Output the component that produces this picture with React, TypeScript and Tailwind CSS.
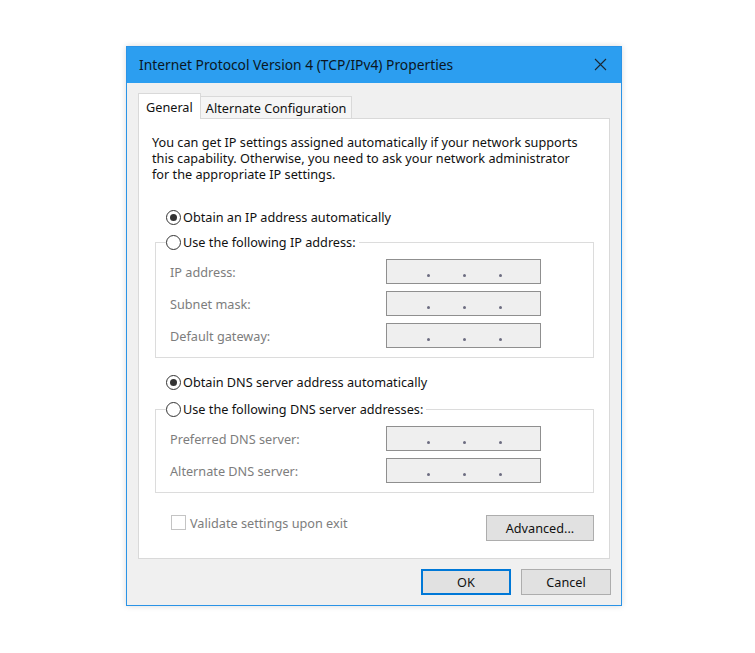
const font = "font-['Noto_Sans','DejaVu_Sans',sans-serif]";

const Radio = ({ checked }: { checked?: boolean }) => (
  <span className="w-[15px] h-[15px] rounded-full border border-[#333333] bg-white flex items-center justify-center shrink-0">
    {checked && <span className="w-[7px] h-[7px] rounded-full bg-[#333333]" />}
  </span>
);

const IpBox = () => (
  <div className="w-[155px] h-[25px] border border-[#8f8f8f] bg-[#efefef] flex items-end pb-[6px] pl-[40px] gap-[33px]">
    <span className="w-[3px] h-[3px] rounded-full bg-[#6c6c80]" />
    <span className="w-[3px] h-[3px] rounded-full bg-[#6c6c80]" />
    <span className="w-[3px] h-[3px] rounded-full bg-[#6c6c80]" />
  </div>
);

const Field = ({ label }: { label: string }) => (
  <div className="flex items-center h-[25px]">
    <span className="w-[216px] text-[#7d7d7d]">{label}</span>
    <IpBox />
  </div>
);

const Group = ({ title, fields }: { title: string; fields: string[] }) => (
  <fieldset className="ml-[16px] mr-[15px] border border-[#dcdcdc] pl-[10px] pb-[9px]">
    <legend className="flex items-center gap-[2px] h-[20px] pr-[3px]">
      <Radio />
      <span>{title}</span>
    </legend>
    <div className="pl-[4px] pt-[7px] flex flex-col gap-[7px]">
      {fields.map((f) => (
        <Field key={f} label={f} />
      ))}
    </div>
  </fieldset>
);

export default function App() {
  return (
    <div className={`min-h-screen bg-white pt-[46px] text-[12.7px] leading-[16px] text-[#111111] ${font}`}>
      <div className="ml-[126px] w-[496px] h-[560px] border border-[#2a93e6] bg-[#f0f0f0] shadow-[0_0_6px_rgba(0,0,0,0.15)] flex flex-col">
        <div className="h-[36px] bg-[#2c9ef0] flex items-center pl-[12px] pr-[14px] shrink-0">
          <span className="text-[13.8px] text-[#0a1622] flex-1">Internet Protocol Version 4 (TCP/IPv4) Properties</span>
          <svg width="13" height="13" viewBox="0 0 13 13" className="mt-[-2px]">
            <path d="M1 1L12 12M12 1L1 12" stroke="#1b2733" strokeWidth="1.1" />
          </svg>
        </div>

        <div className="flex items-end px-[11px] mt-[10px] h-[25px] shrink-0">
          <div className="h-[26px] px-[7px] bg-white border border-b-0 border-[#d9d9d9] flex items-center relative top-[1px] z-10">
            General
          </div>
          <div className="h-[22px] px-[5px] bg-[#f5f5f5] border border-l-0 border-b-0 border-[#d9d9d9] flex items-center">
            Alternate Configuration
          </div>
        </div>

        <div className="mx-[11px] h-[441px] bg-white border border-[#d9d9d9] flex flex-col shrink-0">
          <p className="mt-[15px] pl-[13px] pr-[28px]">
            You can get IP settings assigned automatically if your network supports this capability. Otherwise, you need to ask your network administrator for the appropriate IP settings.
          </p>

          <div className="mt-[25px] ml-[27px] flex items-center gap-[2px] h-[20px]">
            <Radio checked />
            <span>Obtain an IP address automatically</span>
          </div>

          <div className="mt-[5px]">
            <Group title="Use the following IP address:" fields={["IP address:", "Subnet mask:", "Default gateway:"]} />
          </div>

          <div className="mt-[14px] ml-[27px] flex items-center gap-[2px] h-[20px]">
            <Radio checked />
            <span>Obtain DNS server address automatically</span>
          </div>

          <div className="mt-[7px]">
            <Group title="Use the following DNS server addresses:" fields={["Preferred DNS server:", "Alternate DNS server:"]} />
          </div>

          <div className="mt-[22px] pl-[32px] pr-[15px] flex items-start">
            <div className="flex items-center gap-[4px] flex-1 h-[15px]">
              <span className="w-[15px] h-[15px] border border-[#c4c4c4] bg-white shrink-0" />
              <span className="text-[#7d7d7d]">Validate settings upon exit</span>
            </div>
            <button className="w-[108px] h-[26px] bg-[#e1e1e1] border border-[#adadad] text-[#111111]">
              Advanced...
            </button>
          </div>
        </div>

        <div className="flex justify-end gap-[10px] pr-[10px] mt-[10px]">
          <button className="w-[90px] h-[26px] bg-[#e1e1e1] border-2 border-[#0078d7] text-[#111111]">OK</button>
          <button className="w-[90px] h-[26px] bg-[#e1e1e1] border border-[#adadad] text-[#111111]">Cancel</button>
        </div>
      </div>
    </div>
  );
}
